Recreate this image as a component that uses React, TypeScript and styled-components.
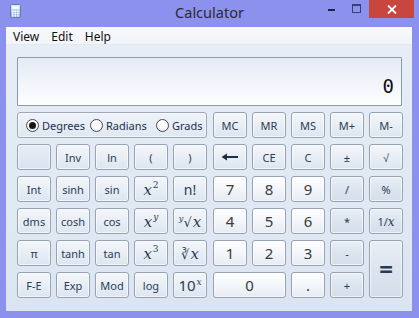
import React from "react";
import styled, { createGlobalStyle, css } from "styled-components";

const Global = createGlobalStyle`
  html, body { margin: 0; padding: 0; overflow: hidden; }
  body { font-family: "Noto Sans", "Open Sans", sans-serif; }
`;

const Window = styled.div`
  width: 419px;
  height: 318px;
  background: #8c91ee;
  display: flex;
  flex-direction: column;
  box-sizing: border-box;
`;

const TitleBar = styled.div`
  height: 27px;
  display: grid;
  grid-template-columns: 1fr auto 1fr;
  align-items: start;
  flex-shrink: 0;
`;

const IconSlot = styled.div`
  padding: 4px 0 0 10px;
  display: flex;
`;

const Title = styled.div`
  font-family: "Noto Sans", sans-serif;
  font-size: 14.5px;
  color: #2b2b2b;
  line-height: 25px;
`;

const Controls = styled.div`
  display: flex;
  justify-content: flex-end;
  padding-right: 5px;
`;

const CtrlButton = styled.div<{ $w: number; $close?: boolean }>`
  width: ${(p) => p.$w}px;
  height: 18px;
  display: flex;
  align-items: center;
  justify-content: center;
  background: ${(p) => (p.$close ? "#c7463d" : "transparent")};
`;

const MinGlyph = styled.div`
  width: 7px;
  height: 2px;
  background: #1f2340;
  margin-top: 2px;
`;

const MaxGlyph = styled.div`
  width: 7px;
  height: 6px;
  border: 1px solid #3a3f70;
  border-top-width: 2px;
  margin-top: -2px;
`;

const Client = styled.div`
  flex: 1;
  margin: 0 7px 7px 6px;
  display: flex;
  flex-direction: column;
  background: #fff;
`;

const MenuBar = styled.div`
  height: 18px;
  display: flex;
  align-items: center;
  padding-left: 1px;
  background: linear-gradient(to bottom, #f8f9fb, #f1f4f8);
  border-bottom: 1px solid #e4e9f0;
  box-sizing: border-box;
  flex-shrink: 0;
`;

const MenuItem = styled.span`
  padding: 0 6px;
  font-size: 12px;
  color: #111;
  line-height: 16px;
  margin-top: 2px;
`;

const Body = styled.div`
  flex: 1;
  padding: 12px 10px 13px 11px;
  background: linear-gradient(to bottom, #e6edf6, #dbe5f1);
  display: flex;
  flex-direction: column;
  gap: 6px;
`;

const Display = styled.div`
  height: 49px;
  box-sizing: border-box;
  border: 1px solid #8e99ad;
  border-radius: 1px;
  background: linear-gradient(to bottom, #e4ebf6, #f3f6fb 60%, #fdfeff);
  display: flex;
  align-items: flex-end;
  justify-content: flex-end;
  padding: 0 7px 9px 0;
  font-family: "DejaVu Sans Mono", "Liberation Mono", monospace;
  font-size: 19px;
  color: #111;
  line-height: 20px;
`;

const Keypad = styled.div`
  display: flex;
  gap: 6px;
`;

const Group = styled.div`
  display: grid;
  grid-template-columns: repeat(5, 34px);
  grid-template-rows: repeat(6, 26px);
  column-gap: 5px;
  row-gap: 6px;
`;

const RadioBox = styled.div`
  grid-column: 1 / -1;
  border: 1px solid #9ca8b9;
  border-radius: 3px;
  background: linear-gradient(to bottom, #eef3f9, #dfe7f1);
  box-shadow: inset 0 0 0 1px rgba(255, 255, 255, 0.55);
  display: grid;
  grid-template-columns: 64px 66px auto;
  align-items: center;
  padding-left: 8px;
`;

const RadioOption = styled.label`
  display: flex;
  align-items: center;
  gap: 3px;
  font-size: 11px;
  color: #1d2f4d;
`;

const RadioCircle = styled.span<{ $checked?: boolean }>`
  width: 13px;
  height: 13px;
  box-sizing: border-box;
  border-radius: 50%;
  border: 1px solid #4a4a4a;
  background: radial-gradient(circle at 50% 40%, #ffffff 40%, #dcdcdc 100%);
  display: flex;
  align-items: center;
  justify-content: center;
  ${(p) =>
    p.$checked &&
    css`
      &::after {
        content: "";
        width: 7px;
        height: 7px;
        border-radius: 50%;
        background: #161616;
      }
    `}
`;

type Variant = "fn" | "num" | "op" | "blank";

const Key = styled.div<{ $v: Variant; $col?: number; $row?: number }>`
  box-sizing: border-box;
  border: 1px solid #97a3b5;
  border-radius: 3px;
  box-shadow: inset 0 0 0 1px rgba(255, 255, 255, 0.6);
  display: flex;
  align-items: center;
  justify-content: center;
  font-family: "Noto Sans", sans-serif;
  font-size: 11px;
  color: #2a3c55;
  white-space: nowrap;
  ${(p) => p.$col && css`grid-column: span ${p.$col};`}
  ${(p) => p.$row && css`grid-row: span ${p.$row};`}
  ${(p) =>
    p.$v === "fn" &&
    css`
      background: linear-gradient(to bottom, #f3f6fa, #e8eef5 50%, #dde5ef);
    `}
  ${(p) =>
    p.$v === "num" &&
    css`
      background: linear-gradient(to bottom, #fefefe, #f3f6fa 50%, #e6ecf3);
      font-size: 15px;
      color: #3a3a3a;
    `}
  ${(p) =>
    p.$v === "op" &&
    css`
      background: linear-gradient(to bottom, #e9eff6, #dce4ee 50%, #d5deea);
    `}
  ${(p) =>
    p.$v === "blank" &&
    css`
      background: linear-gradient(to bottom, #e7edf5, #dae3ee);
    `}
`;

const MathLabel = styled.span`
  display: inline-block;
  line-height: 16px;
  margin-top: 2px;
`;

const MathX = styled.span<{ $size?: number }>`
  font-family: "DejaVu Serif", "Liberation Serif", serif;
  font-style: italic;
  font-size: ${(p) => p.$size ?? 15}px;
  color: #2a3c55;
`;

const Sup = styled.sup<{ $italic?: boolean; $lift?: number }>`
  font-family: "DejaVu Serif", "Liberation Serif", serif;
  font-style: ${(p) => (p.$italic ? "italic" : "normal")};
  font-size: 9px;
  vertical-align: ${(p) => p.$lift ?? 7}px;
  line-height: 0;
  margin-left: 1px;
`;

const RootIndex = styled.sup`
  font-family: "DejaVu Serif", serif;
  font-style: italic;
  font-size: 8px;
  vertical-align: 6px;
  line-height: 0;
`;

const Radical = styled.span`
  font-family: "DejaVu Sans", sans-serif;
  font-size: 13px;
  color: #2a3c55;
  margin-right: 1px;
`;

const BigText = styled.span<{ $size: number }>`
  font-size: ${(p) => p.$size}px;
  color: #2a3c55;
`;

const Equals = styled.span`
  font-size: 24px;
  font-weight: bold;
  color: #2a3c55;
  line-height: 1;
`;

const AppIcon = () => (
  <svg width="11" height="14" viewBox="0 0 11 14">
    <defs>
      <linearGradient id="ig" x1="0" y1="0" x2="0" y2="1">
        <stop offset="0" stopColor="#dbe8f8" />
        <stop offset="1" stopColor="#8fb1de" />
      </linearGradient>
    </defs>
    <rect x="0.5" y="0.5" width="10" height="13" rx="1" fill="url(#ig)" stroke="#5c7fb5" />
    <rect x="2" y="2" width="7" height="3" fill="#f4f8ff" />
    {[0, 1, 2].map((r) =>
      [0, 1, 2].map((c) => (
        <rect key={`${r}-${c}`} x={2 + c * 2.5} y={6.5 + r * 2.3} width="1.6" height="1.5" fill="#ffffff" />
      ))
    )}
  </svg>
);

const CloseGlyph = () => (
  <svg width="10" height="9" viewBox="0 0 10 9">
    <path d="M1 0.5 L9 8.5 M9 0.5 L1 8.5" stroke="#fff" strokeWidth="1.8" />
  </svg>
);

const BackArrow = () => (
  <svg width="18" height="8" viewBox="0 0 18 8">
    <path d="M4 4 H17" stroke="#1f2d44" strokeWidth="2" />
    <path d="M0.5 4 L6 0.5 V7.5 Z" fill="#1f2d44" />
  </svg>
);

export default function App() {
  return (
    <>
      <Global />
      <Window>
        <TitleBar>
          <IconSlot>
            <AppIcon />
          </IconSlot>
          <Title>Calculator</Title>
          <Controls>
            <CtrlButton $w={26}>
              <MinGlyph />
            </CtrlButton>
            <CtrlButton $w={25}>
              <MaxGlyph />
            </CtrlButton>
            <CtrlButton $w={45} $close>
              <CloseGlyph />
            </CtrlButton>
          </Controls>
        </TitleBar>
        <Client>
          <MenuBar>
            <MenuItem>View</MenuItem>
            <MenuItem>Edit</MenuItem>
            <MenuItem>Help</MenuItem>
          </MenuBar>
          <Body>
            <Display>0</Display>
            <Keypad>
              <Group>
                <RadioBox>
                  <RadioOption>
                    <RadioCircle $checked />
                    Degrees
                  </RadioOption>
                  <RadioOption>
                    <RadioCircle />
                    Radians
                  </RadioOption>
                  <RadioOption>
                    <RadioCircle />
                    Grads
                  </RadioOption>
                </RadioBox>
                <Key $v="blank" />
                <Key $v="fn">Inv</Key>
                <Key $v="fn">ln</Key>
                <Key $v="fn">(</Key>
                <Key $v="fn">)</Key>

                <Key $v="fn">Int</Key>
                <Key $v="fn">sinh</Key>
                <Key $v="fn">sin</Key>
                <Key $v="fn">
                  <MathLabel>
                    <MathX>x</MathX>
                    <Sup>2</Sup>
                  </MathLabel>
                </Key>
                <Key $v="fn">
                  <BigText $size={14}>n!</BigText>
                </Key>

                <Key $v="fn">dms</Key>
                <Key $v="fn">cosh</Key>
                <Key $v="fn">cos</Key>
                <Key $v="fn">
                  <MathLabel>
                    <MathX>x</MathX>
                    <Sup $italic>y</Sup>
                  </MathLabel>
                </Key>
                <Key $v="fn">
                  <MathLabel>
                    <RootIndex>y</RootIndex>
                    <Radical>√</Radical>
                    <MathX>x</MathX>
                  </MathLabel>
                </Key>

                <Key $v="fn">π</Key>
                <Key $v="fn">tanh</Key>
                <Key $v="fn">tan</Key>
                <Key $v="fn">
                  <MathLabel>
                    <MathX>x</MathX>
                    <Sup>3</Sup>
                  </MathLabel>
                </Key>
                <Key $v="fn">
                  <MathLabel>
                    <Radical>∛</Radical>
                    <MathX>x</MathX>
                  </MathLabel>
                </Key>

                <Key $v="fn">F-E</Key>
                <Key $v="fn">Exp</Key>
                <Key $v="fn">Mod</Key>
                <Key $v="fn">log</Key>
                <Key $v="fn">
                  <MathLabel>
                    <BigText $size={15}>10</BigText>
                    <Sup $italic $lift={6}>x</Sup>
                  </MathLabel>
                </Key>
              </Group>
              <Group>
                <Key $v="fn">MC</Key>
                <Key $v="fn">MR</Key>
                <Key $v="fn">MS</Key>
                <Key $v="fn">M+</Key>
                <Key $v="fn">M-</Key>

                <Key $v="fn">
                  <BackArrow />
                </Key>
                <Key $v="fn">CE</Key>
                <Key $v="fn">C</Key>
                <Key $v="fn">±</Key>
                <Key $v="fn">√</Key>

                <Key $v="num">7</Key>
                <Key $v="num">8</Key>
                <Key $v="num">9</Key>
                <Key $v="op">/</Key>
                <Key $v="op">%</Key>

                <Key $v="num">4</Key>
                <Key $v="num">5</Key>
                <Key $v="num">6</Key>
                <Key $v="op">*</Key>
                <Key $v="op">
                  <MathLabel>
                    1/<MathX $size={12}>x</MathX>
                  </MathLabel>
                </Key>

                <Key $v="num">1</Key>
                <Key $v="num">2</Key>
                <Key $v="num">3</Key>
                <Key $v="op">-</Key>
                <Key $v="op" $row={2}>
                  <Equals>=</Equals>
                </Key>

                <Key $v="num" $col={2}>
                  0
                </Key>
                <Key $v="num">.</Key>
                <Key $v="op">+</Key>
              </Group>
            </Keypad>
          </Body>
        </Client>
      </Window>
    </>
  );
}
